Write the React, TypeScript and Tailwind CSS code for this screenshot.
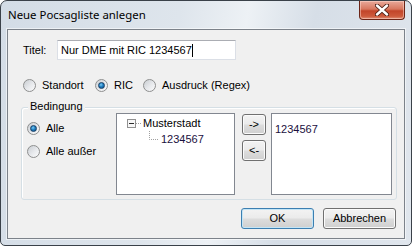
import React from "react";

const ui = { fontFamily: '"Liberation Sans", Arial, sans-serif' };

const Radio = ({ checked }: { checked?: boolean }) => (
  <span className="flex h-[13px] w-[13px] shrink-0 items-center justify-center rounded-full border border-[#8e8f8f] bg-[linear-gradient(135deg,#c9cdd2_0%,#e8eaed_55%,#fbfbfb_100%)]">
    {checked && (
      <span className="h-[7px] w-[7px] rounded-full border border-[#173f66] bg-[radial-gradient(circle_at_40%_35%,#7fcdf5_0%,#1f7fc2_45%,#0b4a80_100%)]" />
    )}
  </span>
);

const RadioItem = ({
  label,
  checked,
  className = "",
}: {
  label: string;
  checked?: boolean;
  className?: string;
}) => (
  <div className={`flex h-[13px] items-center gap-[6px] ${className}`}>
    <Radio checked={checked} />
    <span className="text-[11px] leading-[13px] text-black">{label}</span>
  </div>
);

const WinButton = ({
  children,
  primary,
  className = "",
}: {
  children: React.ReactNode;
  primary?: boolean;
  className?: string;
}) => (
  <button
    className={`flex items-center justify-center rounded-[3px] border bg-[linear-gradient(#f3f3f3_0%,#ebebeb_48%,#dddddd_52%,#cfcfcf_100%)] text-[11px] leading-[13px] text-black ${
      primary
        ? "border-[#3c7fb1] shadow-[inset_0_0_0_1px_#c4e5f6]"
        : "border-[#707070] shadow-[inset_0_0_0_1px_#fbfbfb]"
    } ${className}`}
  >
    {children}
  </button>
);

export default function App() {
  return (
    <div className="h-[246px] w-[412px] bg-white" style={ui}>
      <div className="flex h-full w-full flex-col rounded-t-[7px] rounded-b-[5px] border border-[#3a4149] bg-[linear-gradient(100deg,#d3dce6_0%,#dee5ec_40%,#edf1f5_55%,#d6dee7_70%,#e0e6ed_100%)] px-[6px] pb-[6px]">
        {/* title bar */}
        <div className="flex h-[28px] items-center justify-between">
          <span
            className="pl-[1px] text-[11.4px] leading-[16px] text-black"
            style={{ fontFamily: '"Noto Sans", "Open Sans", sans-serif' }}
          >
            Neue Pocsagliste anlegen
          </span>
          <div className="flex h-[19px] w-[46px] items-center justify-center self-start rounded-b-[4px] border border-t-0 border-[#6b2416] bg-[linear-gradient(#e9a99a_0%,#d8775f_45%,#c2452a_55%,#cd5a3c_85%,#e0927a_100%)] shadow-[inset_0_0_0_1px_rgba(255,220,210,0.5)]">
            <svg width="14" height="12" viewBox="0 0 14 12">
              <path
                d="M2 1.5 L12 10.5 M12 1.5 L2 10.5"
                stroke="#4a1d14"
                strokeWidth="4.2"
                strokeLinecap="round"
              />
              <path
                d="M2 1.5 L12 10.5 M12 1.5 L2 10.5"
                stroke="#ffffff"
                strokeWidth="2.4"
                strokeLinecap="round"
              />
            </svg>
          </div>
        </div>

        {/* client area */}
        <div className="flex flex-1 flex-col border border-[#7c828a] bg-[#f0f0f0] shadow-[0_0_0_1px_rgba(255,255,255,0.55)]">
          <div className="mt-[10px] flex h-[20px] items-center pl-[15px]">
            <span className="w-[34px] text-[11px] leading-[13px] text-black">Titel:</span>
            <div className="flex h-[20px] w-[179px] items-center border border-[#dbdfe6] border-t-[#abadb3] bg-white pl-[3px]">
              <span className="text-[11px] leading-[13px] text-black">Nur DME mit RIC 1234567</span>
              <span className="h-[13px] w-px bg-black" />
            </div>
          </div>

          <div className="mt-[19px] flex h-[13px] items-center pl-[15px]">
            <RadioItem label="Standort" className="w-[72px]" />
            <RadioItem label="RIC" checked className="w-[48px]" />
            <RadioItem label="Ausdruck (Regex)" />
          </div>

          {/* group box */}
          <div className="relative ml-[13px] mr-[7px] mt-[15px] flex h-[93px] rounded-[3px] border border-[#d5dfe5] pb-[4px] pr-[4px] pt-[5px] shadow-[inset_1px_1px_0_#ffffff]">
            <span className="absolute left-[6px] top-[-8px] bg-[#f0f0f0] px-[2px] text-[11px] leading-[13px] text-black">
              Bedingung
            </span>
            <div className="flex w-[94px] flex-col gap-[10px] pl-[5px] pt-[9px]">
              <RadioItem label="Alle" checked />
              <RadioItem label="Alle außer" />
            </div>

            {/* tree */}
            <div className="flex h-[82px] w-[119px] flex-col border border-[#828790] bg-white pt-[1px]">
              <div className="flex h-[16px] items-center pl-[10px]">
                <svg width="9" height="9" viewBox="0 0 9 9" className="shrink-0">
                  <rect x="0.5" y="0.5" width="8" height="8" fill="#f7f7f7" stroke="#919191" />
                  <path d="M2 4.5 H7" stroke="#2b2b2b" />
                </svg>
                <svg width="6" height="9" viewBox="0 0 6 9" className="shrink-0">
                  <path d="M0 4.5 H5" stroke="#a0a0a0" strokeDasharray="1 1" />
                </svg>
                <span className="ml-px text-[11px] leading-[13px] text-black">Musterstadt</span>
              </div>
              <div className="flex h-[16px] items-center pl-[32px]">
                <svg width="10" height="16" viewBox="0 0 10 16" className="shrink-0">
                  <path d="M0.5 0 V8.5 H10" stroke="#a0a0a0" strokeDasharray="1 1" fill="none" />
                </svg>
                <span className="ml-[2px] text-[11px] leading-[13px] text-[#1a1040]">1234567</span>
              </div>
            </div>

            <div className="ml-[7px] mt-[1px] flex w-[24px] flex-col gap-[5px]">
              <WinButton className="h-[21px] w-[24px]">-&gt;</WinButton>
              <WinButton className="h-[21px] w-[24px]">&lt;-</WinButton>
            </div>

            {/* list */}
            <div className="ml-[5px] h-[82px] w-[121px] border border-[#828790] bg-white pl-[3px] pt-[2px]">
              <span className="text-[11px] leading-[13px] text-[#1a1040]">1234567</span>
            </div>
          </div>

          <div className="mt-[8px] flex justify-end gap-[9px] pr-[8px]">
            <WinButton primary className="h-[21px] w-[73px]">
              OK
            </WinButton>
            <WinButton className="h-[21px] w-[73px]">Abbrechen</WinButton>
          </div>
        </div>
      </div>
    </div>
  );
}
